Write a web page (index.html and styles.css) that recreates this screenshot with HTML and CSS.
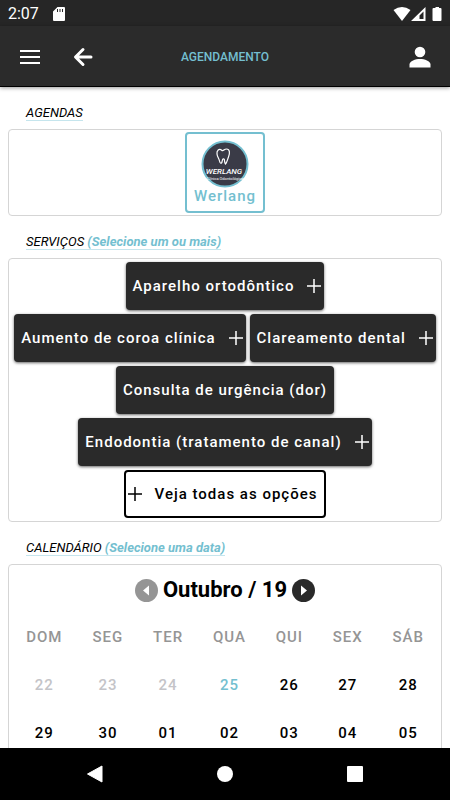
FILE: index.html
```html
<!DOCTYPE html>
<html lang="pt-BR">
<head>
    <meta charset="utf-8">
    <meta name="viewport" content="width=device-width, initial-scale=1">
    <title>Agendamento</title>

    <link rel="stylesheet" href="styles.css">

</head>
<body>

<div class="status-bar">
    <span>2:07</span>
    <svg class="sd-card" width="12" height="14" viewBox="0 0 12 14"><path fill="#fff" fill-rule="evenodd" d="M4.500 0H11a1 1 0 0 1 1 1v12a1 1 0 0 1-1 1H1a1 1 0 0 1-1-1V4.500zM4 2v3h1V2zM6.500 2v3h1V2zM9 2v3h1V2z"/></svg>
    <svg class="signals" width="50" height="16" viewBox="0 0 50 16">
        <path fill="#fff" d="M1.500 4Q10-2 18.500 4L10 15z"/>
        <path fill="#fff" fill-rule="evenodd" d="M19 15L33.500 1v14zM27.500 13h4V5.500l-4 4z"/>
        <path fill="#fff" d="M42 2h1.500V1h3.500v1h1.500q1 0 1 1v11q0 1-1 1h-7q-1 0-1-1V3q0-1 1-1z"/>
    </svg>
</div>

<header class="toolbar">
    <button class="icon-btn" aria-label="Menu">
        <svg width="22" height="16" viewBox="0 0 22 16"><path stroke="#fff" stroke-width="2" d="M1 2h20M1 8h20M1 14h20"/></svg>
    </button>
    <button class="icon-btn" aria-label="Voltar">
        <svg width="20" height="20" viewBox="0 0 20 20"><path fill="none" stroke="#fff" stroke-width="3" stroke-linecap="round" stroke-linejoin="round" d="M10 2.500L2.500 10l7.500 7.500M3 10h15"/></svg>
    </button>
    <h1 class="title">AGENDAMENTO</h1>
    <button class="icon-btn profile" aria-label="Perfil">
        <svg width="22" height="22" viewBox="0 0 22 22"><circle cx="11" cy="6" r="5.300" fill="#fff"/><path fill="#fff" d="M.5 21.500V18.500C.5 15 6.500 13 11 13s10.500 2 10.500 5.500v3z"/></svg>
    </button>
</header>

<main class="content">

    <h2 class="heading">AGENDAS</h2>
    <div class="card">
        <button class="agenda">
            <svg width="48" height="48" viewBox="0 0 48 48">
                <circle cx="24" cy="24" r="22.500" fill="#3a3b47" stroke="#74bfd0" stroke-width="2"/>
                <path fill="none" stroke="#fff" stroke-width="1.200" stroke-linecap="round" stroke-linejoin="round" d="M21 10.500C18 8 15.500 10.500 16 14C16.300 17 18 18.500 18.500 21C19 23.500 20.500 24 21 22C21.500 19.500 21.800 18.500 23 19C24 19.500 23 22.500 24.500 24C26 22.500 26.500 19.500 27.500 17C29 13.500 29 9 25.500 9C23 9 22.500 11.500 21 10.500"/>
                <text class="logo-name" x="23" y="34" text-anchor="middle">WERLANG</text>
                <text class="logo-sub" x="24" y="40" text-anchor="middle">Clínica Odontológica</text>
            </svg>
            <span>Werlang</span>
        </button>
    </div>

    <h2 class="heading">SERVIÇOS <b>(Selecione um ou mais)</b></h2>
    <div class="card services">
        <button class="service">Aparelho ortodôntico <svg class="plus" width="14" height="14" viewBox="0 0 14 14"><path d="M7 0v14M0 7h14"/></svg></button>
        <button class="service">Aumento de coroa clínica <svg class="plus" width="14" height="14" viewBox="0 0 14 14"><path d="M7 0v14M0 7h14"/></svg></button>
        <button class="service">Clareamento dental <svg class="plus" width="14" height="14" viewBox="0 0 14 14"><path d="M7 0v14M0 7h14"/></svg></button>
        <button class="service plain">Consulta de urgência (dor)</button>
        <button class="service">Endodontia (tratamento de canal) <svg class="plus" width="14" height="14" viewBox="0 0 14 14"><path d="M7 0v14M0 7h14"/></svg></button>
        <button class="service outline"><svg class="plus" width="14" height="14" viewBox="0 0 14 14"><path d="M7 0v14M0 7h14"/></svg> Veja todas as opções</button>
    </div>

    <h2 class="heading">CALENDÁRIO <b>(Selecione uma data)</b></h2>
    <div class="card calendar">
        <div class="month">
            <button class="icon-btn" aria-label="Mês anterior" disabled>
                <svg width="23" height="23" viewBox="0 0 23 23"><circle cx="11.500" cy="11.500" r="11.500" fill="#959595"/><path fill="#fff" d="M14 6.500v10l-6-5z"/></svg>
            </button>
            <h3>Outubro / 19</h3>
            <button class="icon-btn" aria-label="Próximo mês">
                <svg width="23" height="23" viewBox="0 0 23 23"><circle cx="11.500" cy="11.500" r="11.500" fill="#2a2a2a"/><path fill="#fff" d="M9 6.500v10l6-5z"/></svg>
            </button>
        </div>
        <table class="days">
            <thead>
                <tr><th>DOM</th><th>SEG</th><th>TER</th><th>QUA</th><th>QUI</th><th>SEX</th><th>SÁB</th></tr>
            </thead>
            <tbody>
                <tr>
                    <td><button disabled>22</button></td>
                    <td><button disabled>23</button></td>
                    <td><button disabled>24</button></td>
                    <td><button class="today">25</button></td>
                    <td><button>26</button></td>
                    <td><button>27</button></td>
                    <td><button>28</button></td>
                </tr>
                <tr>
                    <td><button>29</button></td>
                    <td><button>30</button></td>
                    <td><button>01</button></td>
                    <td><button>02</button></td>
                    <td><button>03</button></td>
                    <td><button>04</button></td>
                    <td><button>05</button></td>
                </tr>
            </tbody>
        </table>
    </div>

</main>

<nav class="nav-bar">
    <button class="icon-btn" aria-label="Voltar">
        <svg width="18" height="18" viewBox="0 0 18 18"><path fill="#fff" stroke="#fff" stroke-linejoin="round" d="M16 1v16L1.500 9z"/></svg>
    </button>
    <button class="icon-btn" aria-label="Início">
        <svg width="18" height="18" viewBox="0 0 18 18"><circle cx="9" cy="9" r="8" fill="#fff"/></svg>
    </button>
    <button class="icon-btn" aria-label="Recentes">
        <svg width="18" height="18" viewBox="0 0 18 18"><rect x="1" y="1" width="16" height="16" rx="1" fill="#fff"/></svg>
    </button>
</nav>

</body>
</html>
```

FILE: styles.css
```css
* {
    box-sizing: border-box;
}

body {
    font-family: Roboto, sans-serif;
    margin: 0;
    height: 100vh;
    display: flex;
    flex-direction: column;
    background-color: #fff;
    color: #000;
}

button {
    font: inherit;
    color: inherit;
    letter-spacing: inherit;
    background: none;
    border: none;
    padding: 0;
    cursor: pointer;
}

svg {
    display: block;
    flex: none;
}

/* android bars */
.status-bar {
    display: flex;
    align-items: center;
    flex: none;
    height: 26px;
    padding: 1px 8px 0;
    background-color: #262626;
    color: #fff;
    font-size: 16px;
}

.sd-card {
    margin-left: 14px;
}

.signals {
    margin-left: auto;
}

.nav-bar {
    display: flex;
    flex: none;
    align-items: center;
    justify-content: center;
    gap: 112px;
    height: 52px;
    background-color: #000;
}

.toolbar {
    display: grid;
    grid-template-columns: 22px 20px 1fr 20px 22px;
    gap: 32px;
    align-items: center;
    flex: none;
    height: 61px;
    padding: 2px 19px 0;
    background-color: #2b2b2b;
    border-bottom: 1px solid #000;
    box-shadow: 0 1px 4px rgba(0, 0, 0, 0.4);
    z-index: 1;
}

.title {
    margin: 0;
    text-align: center;
    font-size: 12px;
    font-weight: 500;
    color: #74bfd0;
}

.profile {
    grid-column: 5;
}

.content {
    flex: 1;
    min-height: 0;
    overflow: hidden;
    padding: 0 8px;
}

.heading {
    width: fit-content;
    margin: 18px 18px 8px;
    border-bottom: 1px solid #c5e5ed;
    font-size: 13px;
    line-height: 15px;
    font-weight: 400;
    font-style: italic;
}

.heading b {
    color: #74bfd0;
    font-weight: 700;
}

.card {
    border: 1px solid #d5d5d5;
    border-radius: 4px;
    padding: 2px;
}

.agenda {
    display: flex;
    flex-direction: column;
    align-items: center;
    margin: 0 auto;
    padding: 6px 7px;
    border: 2px solid #74bfd0;
    border-radius: 4px;
    color: #74bfd0;
    font-size: 15px;
    line-height: 17px;
    font-weight: 500;
    letter-spacing: 1px;
}

.logo-name {
    fill: #fff;
    font-size: 8px;
    font-style: italic;
    font-weight: 500;
    letter-spacing: 0;
}

.logo-sub {
    fill: #fff;
    font-size: 4px;
    font-weight: 400;
    letter-spacing: 0;
}

.services {
    display: flex;
    flex-wrap: wrap;
    justify-content: center;
    gap: 4px;
    padding: 3px;
}

.service {
    display: flex;
    align-items: center;
    gap: 13px;
    height: 48px;
    padding: 0 3px 0 7px;
    border-radius: 4px;
    background-color: #2a2a2a;
    color: #fff;
    font-size: 15px;
    font-weight: 500;
    letter-spacing: 1px;
    box-shadow: 0 1px 3px rgba(0, 0, 0, 0.6);
}

.plain {
    padding: 0 7px;
}

.outline {
    padding: 0 7px 0 2px;
    border: 2px solid #000;
    background-color: #fff;
    color: #000;
    box-shadow: none;
}

.plus {
    fill: none;
    stroke: currentColor;
    stroke-width: 1.5;
}

.month {
    display: flex;
    align-items: center;
    justify-content: center;
    gap: 5px;
    padding-top: 9px;
}

.month h3 {
    margin: 0;
    font-size: 22px;
    line-height: 28px;
    font-weight: 700;
}

.days {
    width: 100%;
    margin-top: 9px;
    border-collapse: collapse;
    font-size: 15px;
    letter-spacing: 1px;
}

.days th,
.days td {
    height: 48px;
    padding: 0 12px;
    text-align: center;
    font-weight: 500;
}

.days th {
    color: #959595;
}

.days td button:disabled {
    color: #c4c4c8;
}

.days .today {
    color: #74bfd0;
}
```
